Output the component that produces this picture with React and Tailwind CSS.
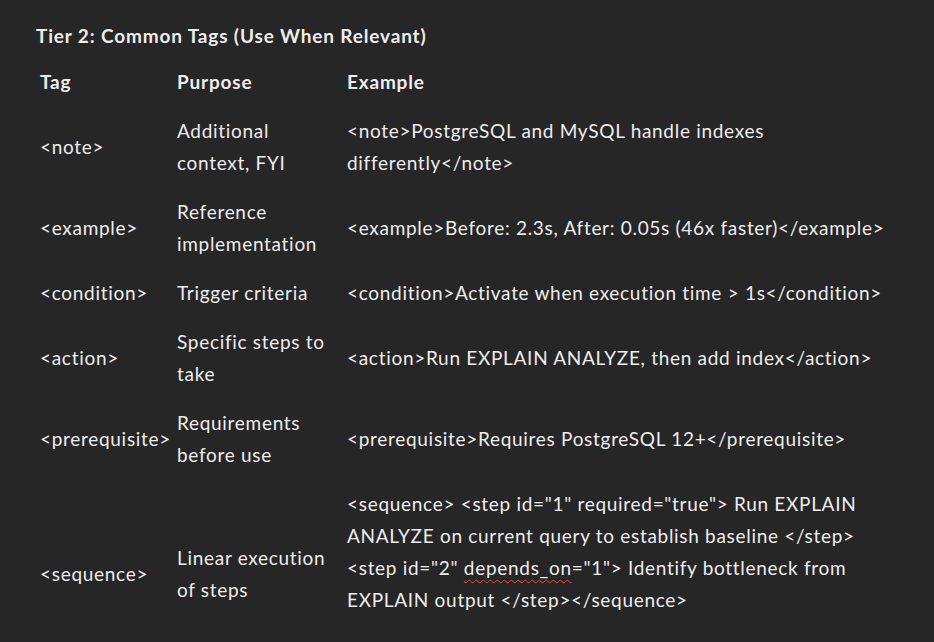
const rows = [
  { tag: "<note>", purpose: ["Additional", "context, FYI"], example: ["<note>PostgreSQL and MySQL handle indexes", "differently</note>"] },
  { tag: "<example>", purpose: ["Reference", "implementation"], example: ["<example>Before: 2.3s, After: 0.05s (46x faster)</example>"] },
  { tag: "<condition>", purpose: ["Trigger criteria"], example: ["<condition>Activate when execution time > 1s</condition>"] },
  { tag: "<action>", purpose: ["Specific steps to", "take"], example: ["<action>Run EXPLAIN ANALYZE, then add index</action>"] },
  { tag: "<prerequisite>", purpose: ["Requirements", "before use"], example: ["<prerequisite>Requires PostgreSQL 12+</prerequisite>"] },
];

function Lines({ lines }) {
  return lines.map((line, i) => (
    <div key={i} className="whitespace-pre">
      {line}
    </div>
  ));
}

export default function App() {
  return (
    <div className="min-h-screen bg-[#262626] pt-[20px] text-[19px] leading-[32px] tracking-[0.7px] text-[#ededed] font-['Lato',sans-serif] overflow-hidden">
      <div className="pl-[36px] font-bold tracking-[0.85px]">Tier 2: Common Tags (Use When Relevant)</div>

      <div className="mt-[14px] pl-[40px] flex flex-col gap-[17px]">
        <div className="grid grid-cols-[137px_170px_1fr] items-center font-bold tracking-[0.8px]">
          <div>Tag</div>
          <div>Purpose</div>
          <div>Example</div>
        </div>

        {rows.map((row) => (
          <div key={row.tag} className="grid grid-cols-[137px_170px_1fr] items-center">
            <div className="whitespace-pre">{row.tag}</div>
            <div>
              <Lines lines={row.purpose} />
            </div>
            <div>
              <Lines lines={row.example} />
            </div>
          </div>
        ))}

        <div className="grid grid-cols-[137px_170px_1fr] items-center">
          <div className="whitespace-pre">{"<sequence>"}</div>
          <div>
            <div>Linear execution</div>
            <div>of steps</div>
          </div>
          <div className="pb-[44px]">
            <div className="whitespace-pre">{'<sequence> <step id="1" required="true"> Run EXPLAIN'}</div>
            <div className="whitespace-pre">{"ANALYZE on current query to establish baseline </step>"}</div>
            <div className="whitespace-pre">
              {'<step id="2" '}
              <span className="underline decoration-wavy decoration-[#e0453f] decoration-1 underline-offset-[4px]">depends_on</span>
              {'="1"> Identify bottleneck from'}
            </div>
            <div className="whitespace-pre">{"EXPLAIN output </step></sequence>"}</div>
          </div>
        </div>
      </div>
    </div>
  );
}
